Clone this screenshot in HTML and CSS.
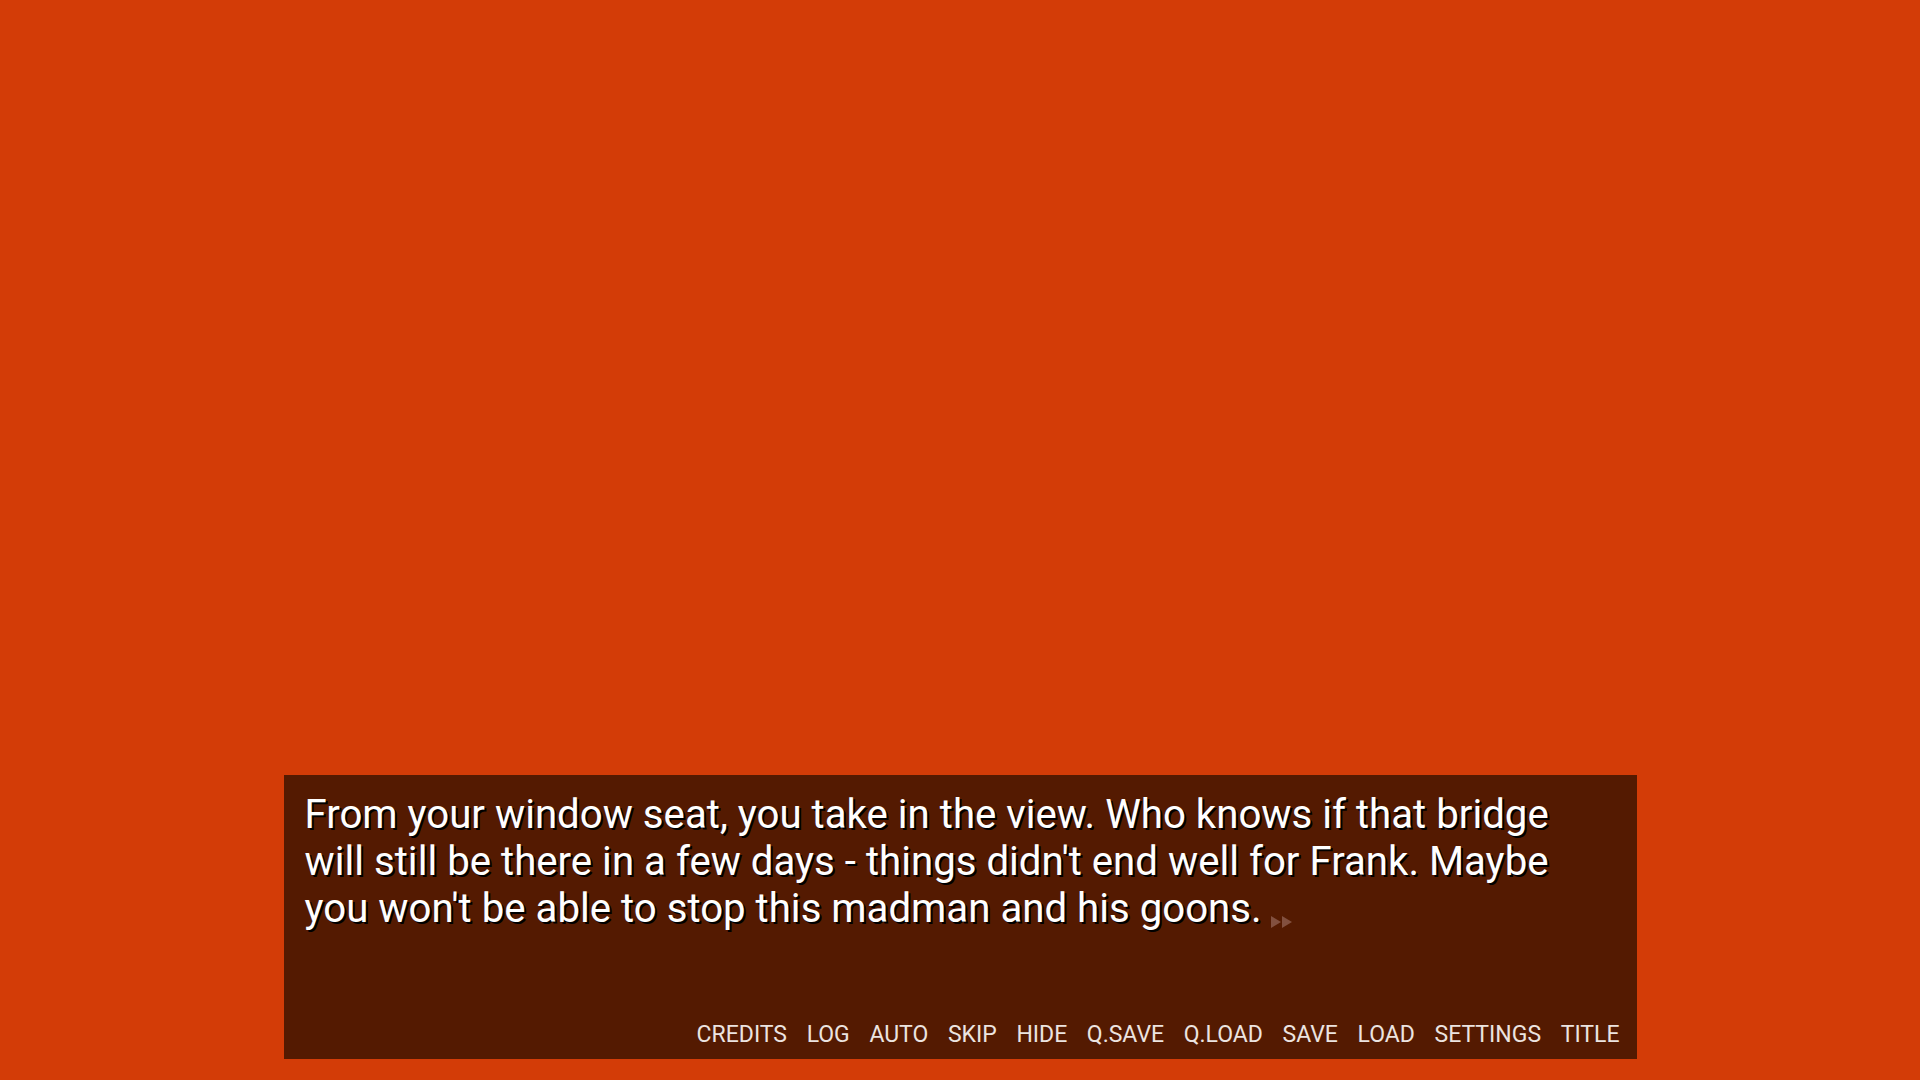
FILE: index.html
```html
<!DOCTYPE html>
<html>
<head>
<meta charset="utf-8">
<link rel="stylesheet" href="styles.css">
</head>
<body>
<div class="stage">
  <div class="window">
    <p class="say">From your window seat, you take in the view. Who knows if that bridge will still be there in a few days - things didn't end well for Frank. Maybe you won't be able to stop this madman and his goons.<span class="ctc"><svg width="22" height="12" viewBox="0 0 22 12"><polygon points="0,0 10,6 0,12" /><polygon points="11,0 21,6 11,12" /></svg></span></p>
    <nav class="quick">
      <span>CREDITS</span>
      <span>LOG</span>
      <span>AUTO</span>
      <span>SKIP</span>
      <span>HIDE</span>
      <span>Q.SAVE</span>
      <span>Q.LOAD</span>
      <span>SAVE</span>
      <span>LOAD</span>
      <span>SETTINGS</span>
      <span>TITLE</span>
    </nav>
  </div>
</div>
</body>
</html>
```
FILE: styles.css
```css
html, body {
  margin: 0;
  padding: 0;
  background: #d33c07;
}
.stage {
  width: 1920px;
  height: 1080px;
  display: flex;
  flex-direction: column;
  justify-content: flex-end;
  align-items: center;
  padding-bottom: 21px;
  box-sizing: border-box;
}
.window {
  width: 1353px;
  height: 284px;
  background: #541a01;
  box-sizing: border-box;
  display: flex;
  flex-direction: column;
  justify-content: space-between;
  padding: 16px 17px 10px 21px;
}
.say {
  margin: 0;
  font-family: Roboto, "Liberation Sans", sans-serif;
  font-size: 40.2px;
  line-height: 47px;
  color: #ffffff;
  text-shadow: 2px 2px 0 #000000;
  width: 1300px;
}
.ctc {
  display: inline-block;
  margin-left: 9px;
  vertical-align: -6px;
}
.ctc svg {
  display: block;
  fill: #82503f;
}
.quick {
  display: flex;
  justify-content: flex-end;
  gap: 19.6px;
  font-family: Roboto, "Liberation Sans", sans-serif;
  font-size: 23px;
  line-height: 28px;
  color: #ece4e0;
}
```
